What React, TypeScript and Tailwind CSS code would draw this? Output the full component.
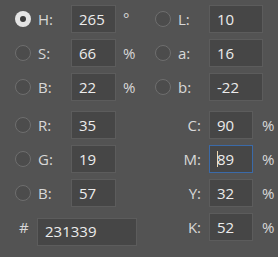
const font = { fontFamily: '"Open Sans", "Noto Sans", sans-serif' };

type RadioProps = { checked?: boolean };

const Radio = ({ checked }: RadioProps) =>
  checked ? (
    <span className="flex h-[16px] w-[16px] shrink-0 items-center justify-center rounded-full bg-[#e4e4e4]">
      <span className="h-[6px] w-[6px] rounded-full bg-[#3a3a3a]" />
    </span>
  ) : (
    <span className="h-[16px] w-[16px] shrink-0 rounded-full border border-[#6e6e6e] bg-[#4c4c4c]" />
  );

type FieldProps = { value: string; width: string; focused?: boolean };

const Field = ({ value, width, focused }: FieldProps) => (
  <div
    className={`flex h-[28px] shrink-0 items-center border pl-[7px] text-[15px] text-[#ececec] ${width} ${
      focused ? "border-[#3b6aa8] bg-[#464646]" : "border-[#5c5c5c] bg-[#464646]"
    }`}
  >
    {focused && <span className="mr-[-1px] h-[16px] w-[1px] bg-[#f0d8b0]" />}
    {value}
  </div>
);

const topRows = [
  { l: "H:", v: "265", u: "°", r: "L:", rv: "10", checked: true },
  { l: "S:", v: "66", u: "%", r: "a:", rv: "16" },
  { l: "B:", v: "22", u: "%", r: "b:", rv: "-22" },
];

const rgbRows = [
  { l: "R:", v: "35", c: "C:", cv: "90" },
  { l: "G:", v: "19", c: "M:", cv: "89", focused: true },
  { l: "B:", v: "57", c: "Y:", cv: "32" },
];

export default function App() {
  return (
    <div
      className="flex h-[257px] w-[278px] flex-col bg-[#535353] pt-[5px] text-[15px] text-[#d8d8d8]"
      style={font}
    >
      <div className="flex flex-col gap-[6px]">
        {topRows.map((row) => (
          <div key={row.l} className="flex h-[28px] items-center pl-[15px]">
            <Radio checked={row.checked} />
            <span className="w-[40px] pl-[7px]">{row.l}</span>
            <Field value={row.v} width="w-[45px]" />
            <span
              className={`w-[39px] pl-[7px] ${row.u === "°" ? "self-start pt-[2px]" : ""}`}
            >
              {row.u}
            </span>
            <Radio />
            <span className="w-[38px] pl-[7px]">{row.r}</span>
            <Field value={row.rv} width="w-[54px]" />
          </div>
        ))}
      </div>

      <div className="mt-[10px] flex flex-col gap-[6px]">
        {rgbRows.map((row) => (
          <div key={row.l + row.c} className="flex h-[28px] items-center pl-[15px]">
            <Radio />
            <span className="w-[40px] pl-[7px]">{row.l}</span>
            <Field value={row.v} width="w-[45px]" />
            <span className="w-[93px] pr-[8px] text-right">{row.c}</span>
            <Field value={row.cv} width="w-[44px]" focused={row.focused} />
            <span className="pl-[9px]">%</span>
          </div>
        ))}
        <div className="flex h-[28px] items-center">
          <span className="w-[37px] pl-[19px]">#</span>
          <div className="mt-[9px]">
            <Field value="231339" width="w-[100px]" />
          </div>
          <span className="w-[72px] pr-[8px] text-right">K:</span>
          <Field value="52" width="w-[44px]" />
          <span className="pl-[9px]">%</span>
        </div>
      </div>
    </div>
  );
}
